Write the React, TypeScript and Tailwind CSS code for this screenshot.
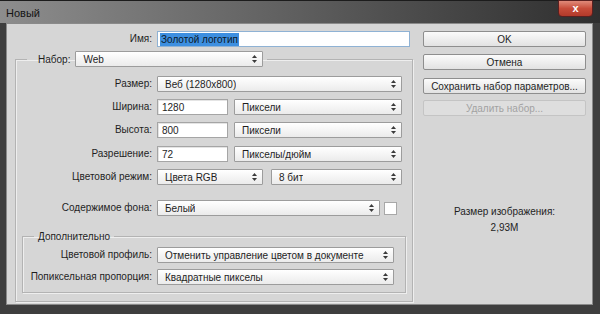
const font = "font-['Liberation_Sans',Arial,sans-serif]";

function Arrows() {
    return (
        <svg width="5" height="8" viewBox="0 0 5 8" className="shrink-0">
            <path d="M2.5 0 L5 3 L0 3 Z" fill="#3a3a3a" />
            <path d="M0 5 L5 5 L2.5 8 Z" fill="#3a3a3a" />
        </svg>
    );
}

function Select({ w, value }: { w: string; value: string }) {
    return (
        <div className={`${w} h-[16px] shrink-0 flex items-center justify-between pl-[7px] pr-[5px] border border-[#9c9c9c] rounded-[1px] bg-gradient-to-b from-[#ffffff] to-[#ebebeb] text-[10px] text-[#1e1e1e]`}>
            <span className="whitespace-nowrap overflow-hidden">{value}</span>
            <Arrows />
        </div>
    );
}

function Input({ w, value }: { w: string; value: string }) {
    return (
        <div className={`${w} h-[16px] shrink-0 flex items-center pl-[4px] border border-[#a5a5a5] bg-white text-[10px] text-[#1e1e1e] shadow-[inset_1px_1px_0_#e4e4e4]`}>
            {value}
        </div>
    );
}

function Label({ w, text }: { w: string; text: string }) {
    return <div className={`${w} shrink-0 whitespace-nowrap text-right pr-[5px] text-[10px] text-[#1e1e1e] leading-[16px]`}>{text}</div>;
}

function Button({ text, disabled, mt }: { text: string; disabled?: boolean; mt: string }) {
    return (
        <div
            className={`${mt} h-[16px] flex items-center justify-center whitespace-nowrap rounded-[2px] border text-[10px] ${
                disabled
                    ? 'border-[#c4c4c4] bg-[#dedede] text-[#a2a2a2]'
                    : 'border-[#8e8e8e] bg-gradient-to-b from-[#fbfbfb] to-[#e2e2e2] text-[#1e1e1e]'
            }`}
        >
            {text}
        </div>
    );
}

export default function App() {
    return (
        <div className={`w-[600px] h-[314px] flex flex-col bg-[#3e3e3e] ${font}`}>
            {/* Title bar */}
            <div className="h-[23px] shrink-0 flex items-start justify-between bg-gradient-to-r from-[#8d8d8d] via-[#5e5e5e] to-[#2f2f2f] border-t border-[#1c1c1c]">
                <span className="ml-[6px] mt-[4px] text-[11px] text-[#141414]">Новый</span>
                <div className="mr-[7px] -mt-px w-[35px] h-[17px] flex items-center justify-center rounded-b-[4px] border border-[#5a2020] bg-gradient-to-b from-[#e08a7a] via-[#c74c3a] to-[#b23a2a] text-white text-[11px] font-bold leading-none">
                    x
                </div>
            </div>

            {/* Body */}
            <div className="flex-1 flex ml-[6px] mr-[7px] mb-[9px] bg-[#d6d6d6] border border-[#8a8a8a]">
                {/* Left column */}
                <div className="w-[409px] shrink-0 flex flex-col">
                    <div className="mt-[7px] flex h-[16px]">
                        <Label w="w-[150px]" text="Имя:" />
                        <div className="w-[253px] h-[16px] flex items-center pl-[2px] border border-[#8fb2d4] bg-white">
                            <span className="bg-[#3d8fe0] text-[#0c1a2a] text-[10px] leading-[13px] px-px">Золотой логотип</span>
                        </div>
                    </div>

                    <fieldset className="mt-[4px] ml-[8px] w-[398px] h-[251px] border border-[#b3b3b3] shadow-[1px_1px_0_#eeeeee,inset_1px_1px_0_#eeeeee] flex flex-col">
                        <legend className="ml-[11px] pl-[11px] pr-[4px] flex items-center h-[16px]">
                            <span className="text-[10px] text-[#1e1e1e] pr-[5px]">Набор:</span>
                            <Select w="w-[188px]" value="Web" />
                        </legend>

                        <div className="mt-[9px] flex">
                            <Label w="w-[141px]" text="Размер:" />
                            <Select w="w-[245px]" value="Веб  (1280x800)" />
                        </div>
                        <div className="mt-[7px] flex">
                            <Label w="w-[141px]" text="Ширина:" />
                            <Input w="w-[71px]" value="1280" />
                            <div className="ml-[6px]"><Select w="w-[168px]" value="Пиксели" /></div>
                        </div>
                        <div className="mt-[7px] flex">
                            <Label w="w-[141px]" text="Высота:" />
                            <Input w="w-[71px]" value="800" />
                            <div className="ml-[6px]"><Select w="w-[168px]" value="Пиксели" /></div>
                        </div>
                        <div className="mt-[8px] flex">
                            <Label w="w-[141px]" text="Разрешение:" />
                            <Input w="w-[71px]" value="72" />
                            <div className="ml-[6px]"><Select w="w-[168px]" value="Пикселы/дюйм" /></div>
                        </div>
                        <div className="mt-[7px] flex">
                            <Label w="w-[141px]" text="Цветовой режим:" />
                            <Select w="w-[106px]" value="Цвета RGB" />
                            <div className="ml-[8px]"><Select w="w-[131px]" value="8 бит" /></div>
                        </div>
                        <div className="mt-[15px] flex items-center">
                            <Label w="w-[141px]" text="Содержимое фона:" />
                            <Select w="w-[223px]" value="Белый" />
                            <div className="ml-[4px] w-[13px] h-[13px] bg-white border border-[#a8a8a8]" />
                        </div>

                        <fieldset className="mt-[14px] ml-[6px] w-[384px] h-[63px] border border-[#b3b3b3] shadow-[1px_1px_0_#eeeeee,inset_1px_1px_0_#eeeeee] flex flex-col">
                            <legend className="ml-[11px] px-[4px] text-[10px] text-[#1e1e1e] leading-[13px]">Дополнительно</legend>
                            <div className="mt-[4px] flex">
                                <Label w="w-[134px]" text="Цветовой профиль:" />
                                <Select w="w-[237px]" value="Отменить управление цветом в документе" />
                            </div>
                            <div className="mt-[6px] flex">
                                <Label w="w-[134px]" text="Попиксельная пропорция:" />
                                <Select w="w-[237px]" value="Квадратные пикселы" />
                            </div>
                        </fieldset>
                    </fieldset>
                </div>

                {/* Right column */}
                <div className="ml-[7px] w-[163px] shrink-0 flex flex-col">
                    <Button mt="mt-[7px]" text="OK" />
                    <Button mt="mt-[7px]" text="Отмена" />
                    <Button mt="mt-[8px]" text="Сохранить набор параметров..." />
                    <Button mt="mt-[6px]" text="Удалить набор..." disabled />
                    <div className="mt-[88px] text-center text-[10px] text-[#1e1e1e] leading-[16px]">Размер изображения:</div>
                    <div className="text-center text-[10px] text-[#1e1e1e] leading-[16px]">2,93M</div>
                </div>
            </div>
        </div>
    );
}
